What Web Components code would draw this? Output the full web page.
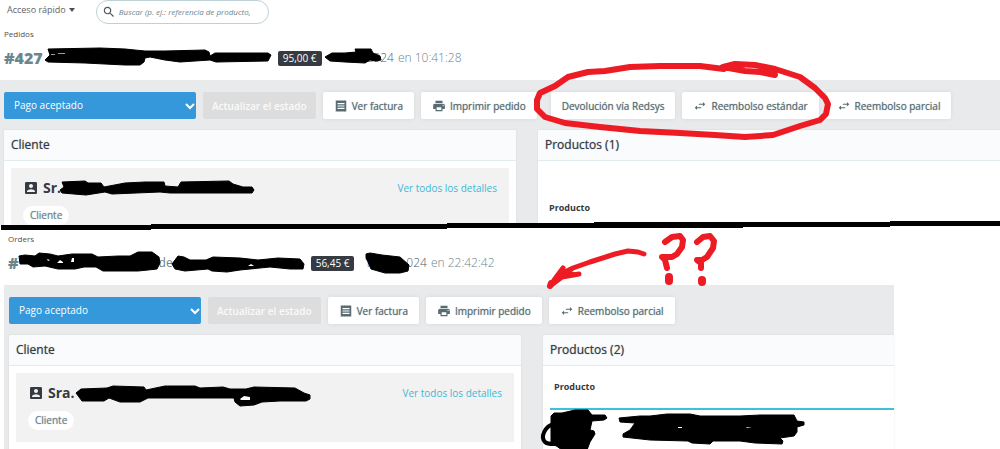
<!DOCTYPE html>
<html lang="es">
<head>
<meta charset="utf-8">
<title>Pedidos</title>
<style>
  body{
    margin: 0;
    position: relative;
    background: #fff;
    color: #363a41;
    font-family: "Open Sans", "Noto Sans", sans-serif;
    font-size: 10px;
    overflow: hidden;
  }
  .first{
    height: 225px;
    margin-bottom: 6px;
    overflow: hidden;
  }
  .second{
    margin: 0 106px 0 4px;
    --pad: 5px;
  }
</style>
</head>
<body>
<main>
  <section class="first">
    <quick-bar></quick-bar>
    <order-title section="Pedidos" number="#427" total="95,00 €">
      <redacted-gap slot="name" width="235"></redacted-gap>
      <redacted-gap slot="date" width="41"></redacted-gap>
      <span slot="date">2024</span>
      <span slot="time">en 10:41:28</span>
    </order-title>
    <order-body>
      <order-status slot="actions"></order-status>
      <action-button slot="actions" icon="receipt">Ver factura</action-button>
      <action-button slot="actions" icon="print">Imprimir pedido</action-button>
      <redacted-gap slot="actions" width="0"></redacted-gap>
      <action-button slot="actions">Devolución vía Redsys</action-button>
      <action-button slot="actions" icon="swap">Reembolso estándar</action-button>
      <action-button slot="actions" icon="swap">Reembolso parcial</action-button>
      <info-card heading="Cliente"><customer-box prefix="Sr."></customer-box></info-card>
      <info-card heading="Productos (1)"><product-table spaced></product-table></info-card>
    </order-body>
  </section>
  <section class="second">
    <order-title section="Orders" number="#" total="56,45 €">
      <redacted-gap slot="name" width="140"></redacted-gap>
      <span slot="name">de</span>
      <redacted-gap slot="name" width="138"></redacted-gap>
      <redacted-gap slot="date" width="6"></redacted-gap>
      <span slot="date">1</span>
      <redacted-gap slot="date" width="35"></redacted-gap>
      <span slot="date">024</span>
      <span slot="time">en 22:42:42</span>
    </order-title>
    <order-body>
      <order-status slot="actions"></order-status>
      <action-button slot="actions" icon="receipt">Ver factura</action-button>
      <action-button slot="actions" icon="print">Imprimir pedido</action-button>
      <action-button slot="actions" icon="swap">Reembolso parcial</action-button>
      <info-card heading="Cliente"><customer-box prefix="Sra."></customer-box></info-card>
      <info-card heading="Productos (2)"><product-table></product-table></info-card>
    </order-body>
  </section>
</main>
<ink-layer></ink-layer>

<script>
const ICONS = {
  receipt: 'M18 17H6v-2h12v2zm0-4H6v-2h12v2zm0-4H6V7h12v2zM3 22l1.500-1L6 22l1.500-1L9 22l1.500-1L12 22l1.500-1L15 22l1.500-1L18 22l1.500-1L21 22V2l-1.500 1L18 2l-1.500 1L15 2l-1.500 1L12 2l-1.500 1L9 2 7.500 3 6 2 4.500 3 3 2v20z',
  print: 'M19 8H5c-1.660 0-3 1.340-3 3v6h4v4h12v-4h4v-6c0-1.660-1.340-3-3-3zm-3 11H8v-5h8v5zm3-7c-.55 0-1-.45-1-1s.45-1 1-1 1 .45 1 1-.45 1-1 1zm-1-9H6v4h12V3z',
  swap: 'M6.990 11L3 15l3.990 4v-3H14v-2H6.990v-3zM21 9l-3.990-4v3H10v2h7.010v3L21 9z',
  account: 'M3 5v14c0 1.100.89 2 2 2h14c1.100 0 2-.9 2-2V5c0-1.100-.9-2-2-2H5c-1.110 0-2 .9-2 2zm12 4c0 1.660-1.340 3-3 3s-3-1.340-3-3 1.340-3 3-3 3 1.340 3 3zm-9 8c0-2 4-3.100 6-3.100s6 1.100 6 3.100v1H6v-1z',
  search: 'M15.500 14h-.79l-.28-.27C15.410 12.590 16 11.110 16 9.500 16 5.910 13.090 3 9.500 3S3 5.910 3 9.500 5.910 16 9.500 16c1.610 0 3.090-.59 4.230-1.570l.27.28v.79l5 4.990L20.490 19l-4.990-5zm-6 0C7.010 14 5 11.990 5 9.500S7.010 5 9.500 5 14 7.010 14 9.500 11.990 14 9.500 14z',
};

const icon = (name, size) =>
  `<svg width="${size}" height="${size}" viewBox="0 0 24 24" fill="currentColor" aria-hidden="true"><path d="${ICONS[name]}"/></svg>`;

class BaseElement extends HTMLElement {
  connectedCallback() {
    if (this.shadowRoot) return;
    this.attachShadow({ mode: 'open' }).innerHTML = this.template();
  }
}

class QuickBar extends BaseElement {
  template() {
    return `
<style>
  :host{
    display: flex;
    align-items: flex-start;
    gap: 21px;
    padding: 0 7px;
    height: 26px;
  }
  button{
    display: flex;
    align-items: center;
    gap: 3px;
    border: 0;
    padding: 0;
    background: none;
    color: #5f6368;
    font: 9px/20px "Open Sans", sans-serif;
  }
  label{
    display: flex;
    align-items: center;
    box-sizing: border-box;
    width: 173px;
    height: 24px;
    padding: 0 12px 0 5px;
    gap: 3px;
    border: 1px solid #bcd0d6;
    border-radius: 12px;
    color: #4c5a60;
  }
  svg{ flex: none; }
  input{
    flex: 1;
    min-width: 0;
    border: 0;
    padding: 0;
    outline: 0;
    background: none;
    font: italic 8px/16px "Open Sans", sans-serif;
  }
  input::placeholder{ color: #6c868e; opacity: 1; }
</style>
<button type="button">Acceso rápido
  <svg width="6" height="4" viewBox="0 0 6 4" aria-hidden="true"><path d="M0 0h6L3 4z" fill="#4c4f54"/></svg>
</button>
<label>${icon('search', 14)}<input type="text" aria-label="Buscar" placeholder="Buscar (p. ej.: referencia de producto,"></label>`;
  }
}
customElements.define('quick-bar', QuickBar);

// blank stretch of a line, its contents are struck out
class RedactedGap extends BaseElement {
  template() {
    return `<style>:host{ display: inline-block; width: ${this.getAttribute('width')}px; }</style>`;
  }
}
customElements.define('redacted-gap', RedactedGap);

class OrderTitle extends BaseElement {
  template() {
    return `
<style>
  :host{ display: block; height: 54px; padding: 0 4px; }
  nav{ font-size: 8px; line-height: 16px; color: #4c4f54; }
  h1{
    display: flex;
    align-items: center;
    margin: 5px 0 0;
    font-size: 12px;
    font-weight: 400;
    line-height: 22px;
    color: #6c868e;
    white-space: nowrap;
  }
  strong{ font-size: 16px; font-weight: 800; }
  .total{
    margin-right: 4px;
    padding: 0 5px;
    border-radius: 2px;
    background: #363a41;
    color: #fff;
    font-size: 10px;
    line-height: 15px;
  }
  .date{ margin-right: 4px; color: #4c5a60; font-weight: 300; }
  .time{ font-weight: 300; }
</style>
<nav>${this.getAttribute('section')}</nav>
<h1>
  <strong>${this.getAttribute('number')}</strong>
  <slot name="name"></slot>
  <span class="total">${this.getAttribute('total')}</span>
  <span class="date"><slot name="date"></slot></span>
  <span class="time"><slot name="time"></slot></span>
</h1>`;
  }
}
customElements.define('order-title', OrderTitle);

class OrderBody extends BaseElement {
  template() {
    return `
<style>
  :host{
    display: block;
    padding: 12px 0 0 var(--pad, 4px);
    background: #e8eaec;
  }
  .actions{ display: flex; gap: 7px; margin-bottom: 11px; }
  .cards{
    display: grid;
    grid-template-columns: minmax(0, 512px) minmax(0, 1fr);
    gap: 22px;
  }
</style>
<div class="actions"><slot name="actions"></slot></div>
<div class="cards"><slot></slot></div>`;
  }
}
customElements.define('order-body', OrderBody);

class OrderStatus extends BaseElement {
  template() {
    return `
<style>
  :host{ display: flex; gap: 7px; }
  .select{ position: relative; }
  select{
    appearance: none;
    display: block;
    width: 192px;
    height: 27px;
    padding: 0 10px 2px;
    border: 0;
    border-radius: 2px;
    background: #3498db;
    color: #fff;
    font: 10px "Open Sans", sans-serif;
  }
  svg{ position: absolute; right: 1px; top: 10px; pointer-events: none; }
  button{
    height: 27px;
    padding: 0 9px;
    border: 0;
    border-radius: 2px;
    background: #dddddd;
    color: #fafafa;
    font: 600 10px "Open Sans", sans-serif;
    white-space: nowrap;
  }
</style>
<div class="select">
  <select aria-label="Estado"><option>Pago aceptado</option></select>
  <svg width="10" height="8" viewBox="0 0 10 8" fill="none" stroke="#fff" stroke-width="2" aria-hidden="true"><path d="M1 2l4 4 4-4"/></svg>
</div>
<button type="button" disabled>Actualizar el estado</button>`;
  }
}
customElements.define('order-status', OrderStatus);

class ActionButton extends BaseElement {
  template() {
    const name = this.getAttribute('icon');
    return `
<style>
  :host{ display: block; }
  button{
    display: flex;
    align-items: center;
    gap: 4px;
    height: 27px;
    padding: 0 11px;
    border: 0;
    border-radius: 2px;
    background: #fff;
    box-shadow: 0 0 4px rgba(0, 0, 0, .08);
    color: #576c72;
    font: 500 10px "Open Sans", sans-serif;
    text-shadow: 0 0 1px rgba(87, 108, 114, .7);
    white-space: nowrap;
  }
</style>
<button type="button">${name ? icon(name, 14) : ''}<span><slot></slot></span></button>`;
  }
}
customElements.define('action-button', ActionButton);

class InfoCard extends BaseElement {
  template() {
    return `
<style>
  :host{
    display: block;
    min-height: 118px;
    border-radius: 2px 2px 0 0;
    background: #fff;
    box-shadow: 0 0 2px rgba(0, 0, 0, .1);
  }
  h2{
    margin: 0;
    padding: 0 7px;
    border-bottom: 1px solid #e4ebee;
    border-radius: 2px 2px 0 0;
    background: #fafbfd;
    font-size: 12px;
    font-weight: 500;
    line-height: 30px;
    text-shadow: 0 0 1px rgba(54, 58, 65, .6);
  }
  div{ padding: 7px 0 7px 7px; }
</style>
<h2>${this.getAttribute('heading')}</h2>
<div><slot></slot></div>`;
  }
}
customElements.define('info-card', InfoCard);

class CustomerBox extends BaseElement {
  template() {
    return `
<style>
  :host{
    display: block;
    box-sizing: border-box;
    height: 69px;
    margin-right: 7px;
    padding: 10px 12px 0;
    background: #f2f2f2;
  }
  header{ display: flex; align-items: center; line-height: 20px; }
  h3{ margin: 0 auto 0 4px; font-size: 14px; font-weight: 700; }
  a{ color: #3db9d5; text-decoration: none; }
  p{
    width: max-content;
    margin: 8px 0 0;
    padding: 0 7px;
    border-radius: 10px;
    background: #fff;
    color: #6c868e;
    font-weight: 500;
    line-height: 19px;
    text-shadow: 0 0 1px rgba(108, 134, 142, .7);
  }
</style>
<header>
  ${icon('account', 16)}
  <h3>${this.getAttribute('prefix')}</h3>
  <a href="#">Ver todos los detalles</a>
</header>
<p>Cliente</p>`;
  }
}
customElements.define('customer-box', CustomerBox);

class ProductTable extends BaseElement {
  template() {
    return `
<style>
  :host{ display: block; }
  :host([spaced]){ padding-top: 26px; }
  table{ width: 100%; border-collapse: collapse; }
  th{
    height: 36px;
    padding: 5px 4px 13px;
    box-sizing: border-box;
    border-bottom: 2px solid #3ec0da;
    text-align: left;
    font-size: 9px;
    font-weight: 700;
    line-height: 16px;
  }
</style>
<table><thead><tr><th scope="col">Producto</th></tr></thead></table>`;
  }
}
customElements.define('product-table', ProductTable);

// hand-drawn strokes on top of the page
class InkLayer extends BaseElement {
  template() {
    return `
<style>
  :host{ position: absolute; left: 0; top: 0; pointer-events: none; }
  svg{ display: block; }
  .black{ fill: #000; stroke: #000; stroke-width: 1; stroke-linejoin: round; }
  .red{ fill: none; stroke: #ed1c24; stroke-width: 6; stroke-linecap: round; stroke-linejoin: round; }
</style>
<svg width="1000" height="449" viewBox="0 0 1000 449" aria-hidden="true">
  <path fill="#000" d="M1 225H151V224H447V223H594V222H890V221H1000V226H890V227H743V228H447V229H151V230H1Z"/>
  <g class="black">
    <path d="M48 49L100 48 125 49 145 51 165 51 205 50 209 52 210 56 215 53 268 53 271 55 268 61 216 62 210 60 180 62 165 60 150 57 145 58 144 62 140 65 125 65 85 63 48 62 45 60 50 55Z"/>
    <path d="M325 57L332 53 345 53 356 52 355 49 371 49 373 53 380 56 381 60 375 61 370 60 365 63 345 62 330 61Z"/>
    <path d="M62 182L85 181 88 183 101 183 104 187 125 183 145 182 164 182 165 186 178 187 181 182 229 181 233 184 243 187 252 187 254 190 252 193 200 193 170 193 160 192 112 194 105 192 86 195 62 193 60 190 64 187Z"/>
    <path d="M19 256L25 255 35 256 39 253 50 254 58 256 72 254 92 254 98 257 118 256 130 256 138 252 152 252 159 257 160 263 157 269 148 270 138 271 103 271 96 267 84 267 75 269 58 269 45 266 33 267 28 264 20 264Z"/>
    <path d="M172 264L178 256 184 257 190 260 206 260 213 257 240 258 258 260 278 258 300 259 304 264 303 269 290 269 270 267 240 270 227 272 212 271 208 269 185 271 175 269Z"/>
    <path d="M366 254L370 253 382 255 400 257 409 265 408 271 400 273 385 273 371 269 368 262 366 258Z"/>
    <path d="M76 393L81 389 107 388 113 386 144 387 146 390 165 386 195 386 200 388 223 387 230 389 246 389 254 387 295 388 304 393 310 395 310 399 306 401 280 401 262 402 254 405 240 406 235 402 234 398 195 398 148 398 140 402 120 402 109 398 104 401 82 401Z"/>
    <path d="M551 416L554 413 562 413 575 410 588 410 592 415 605 415 607 418 604 420 592 421 590 430 594 431 595 434 590 442 587 450 562 450 551 442Z"/>
    <path d="M619 418L640 416 650 416 667 414 690 414 700 416 740 416 760 415 794 415 797 421 804 422 804 425 797 427 797 432 794 436 780 438 783 441 782 444 755 443 740 441 713 441 710 444 692 443 688 441 650 440 623 437 623 434 630 430 635 423 620 422Z"/>
    <path d="M554 424C545 426 540 437 545 442 549 446 558 442 565 446" style="fill:none;stroke-width:4"/>
  </g>
  <g fill="#fff">
    <path d="M57 263l3-3 3 2v1zM72 258h2v4h-3zM47 259l3 1-2 1zM248 266l3-2 3 2zM240 399l4-3 6 1v3h-9zM678 427h4v1h-4zM746 427l6 1-5 0z"/>
    <path d="M51 54h4v1h-4zM58 53h7v1h-7z" opacity=".6"/>
  </g>
  <g class="red">
    <path d="M775 75L760 72 745 71 723 67 735 64 755 65 775 69 800 77 815 88 825 98 828 104 826 114 820 120 800 126 785 131 773 135 745 137 715 135 680 133 640 131 600 127 565 123 545 117 537 109 537 100 540 93 555 86 568 77 588 72 605 71 630 67 660 66 700 66 724 69"/>
    <path d="M644 254L638 252 628 251 615 254 590 262 573 268 563 273 550 286" style="stroke-width:5"/>
    <path d="M563 268L557 276 550 286 562 277 579 274" style="fill:#ed1c24;stroke-width:5"/>
    <path d="M550 286L551 283"/>
    <path d="M665 242L672 237 680 236 683 240 682 247 677 254 672 257 662 257 665 260 667 268"/>
    <path d="M697 242L703 237 710 236 714 241 713 248 707 257 702 260 697 260 701 263 701 268"/>
    <path d="M669 277V281M702 280V282" style="stroke-width:8"/>
  </g>
</svg>`;
  }
}
customElements.define('ink-layer', InkLayer);
</script>
</body>
</html>
